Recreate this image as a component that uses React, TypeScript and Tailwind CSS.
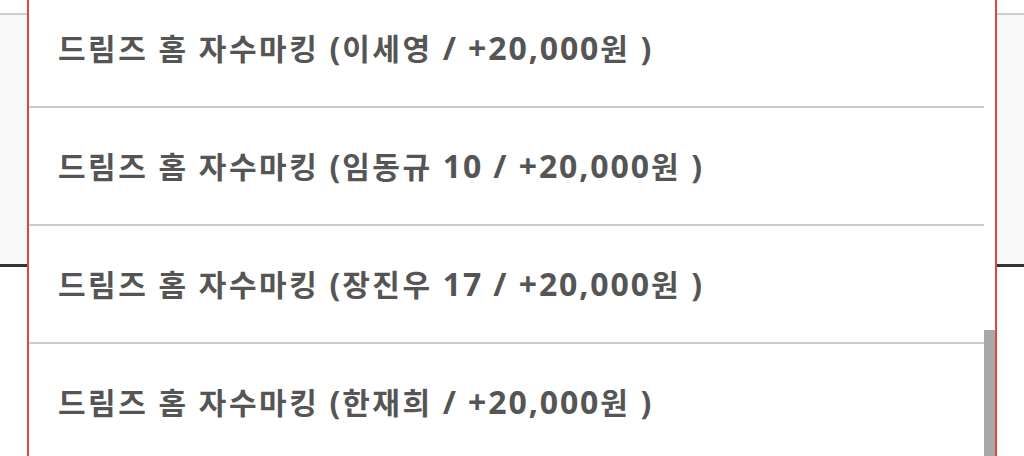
import React from 'react';

const options = [
  '드림즈 홈 자수마킹 (이세영 / +20,000원 )',
  '드림즈 홈 자수마킹 (임동규 10 / +20,000원 )',
  '드림즈 홈 자수마킹 (장진우 17 / +20,000원 )',
  '드림즈 홈 자수마킹 (한재희 / +20,000원 )',
];

// Hangul runs and Latin runs use different faces in the original, so split them
const OptionLabel: React.FC<{ text: string }> = ({ text }) => {
  const parts = text.split(/([\uAC00-\uD7A3]+)/).filter((p) => p.length > 0);
  return (
    <span className="whitespace-pre">
      {parts.map((part, i) =>
        /[\uAC00-\uD7A3]/.test(part) ? (
          <span key={i} className="text-[30px] tracking-[2.5px]" style={{ fontFamily: '"Noto Sans CJK KR", sans-serif' }}>
            {part}
          </span>
        ) : (
          <span key={i} className="text-[32px] tracking-[1.9px]" style={{ fontFamily: '"Open Sans", "Noto Sans CJK KR", sans-serif' }}>
            {part}
          </span>
        )
      )}
    </span>
  );
};

const App: React.FC = () => {
  return (
    <div className="relative w-[1024px] h-[456px] overflow-hidden bg-white">
      {/* Page behind the open select */}
      <div className="pt-[13px]">
        <div className="h-[254px] bg-[#f9f9f9] border-t-2 border-[#cccccc]">
          <div className="h-full border-b-[3px] border-[#333333]"></div>
        </div>
      </div>

      {/* Open dropdown list */}
      <div className="absolute left-[27px] top-[-10px] w-[970px] h-[466px] bg-white border-x-2 border-[#e0453a] flex">
        <ul className="flex-1">
          {options.map((label, idx) => (
            <li
              key={idx}
              className="h-[118px] border-b-2 border-[#cccccc] flex items-center pl-[29px] font-bold text-[#555555]"
            >
              <OptionLabel text={label} />
            </li>
          ))}
        </ul>
        <div className="w-[11px] flex flex-col">
          <div className="h-[340px]"></div>
          <div className="flex-1 bg-[#a8a8a8]"></div>
        </div>
      </div>
    </div>
  );
};

export default App;
